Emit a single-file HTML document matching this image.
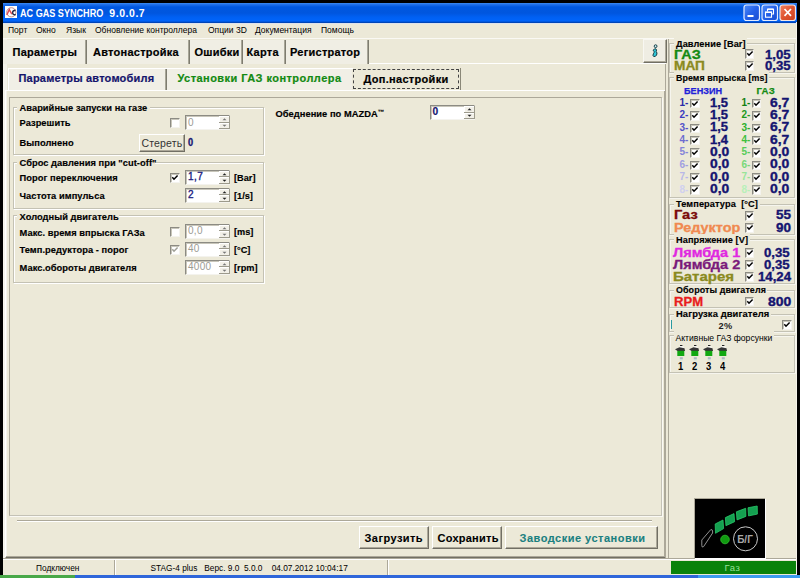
<!DOCTYPE html>
<html><head><meta charset="utf-8"><style>
*{margin:0;padding:0;box-sizing:border-box}
html,body{width:800px;height:578px;overflow:hidden;background:#000;font-family:"Liberation Sans",sans-serif}
.a{position:absolute;white-space:nowrap}
</style></head><body>
<div class="a" style="left:3px;top:22px;width:794px;height:553px;background:#ECE9D8"></div>
<div class="a" style="left:3px;top:3px;width:794px;height:20px;background:linear-gradient(#3C8CF0 0px,#2070EA 1.5px,#0058E0 4px,#0056DE 10px,#0060F2 14px,#0064FA 18px,#0048C0 19.2px,#0040A8 20px)"></div>
<div class="a" style="left:3px;top:23px;width:794px;height:1px;background:#DCE2EE"></div>
<div class="a" style="left:0px;top:575px;width:800px;height:3px;background:#2E66DA"></div>
<div class="a" style="left:698px;top:575px;width:102px;height:3px;background:#3C9CF0"></div>
<div class="a" style="left:0px;top:575px;width:75px;height:3px;background:#48A848"></div>
<div class="a" style="left:3px;top:39px;width:4px;height:519px;background:#F5F3EB"></div>
<div class="a" style="left:796px;top:22px;width:1px;height:553px;background:#F5F3EA"></div>
<svg class="a" style="left:5px;top:6px" width="12" height="12" viewBox="0 0 12 12"><rect width="12" height="12" fill="#fff"/><circle cx="6.3" cy="6.3" r="4.6" fill="none" stroke="#B88080" stroke-width="0.9"/><path d="M1.8 9 L4.3 3.6 L6.8 8.2" fill="none" stroke="#E04850" stroke-width="1.4"/><path d="M10.6 4.2 Q7.6 4.2 7.6 6.6 Q7.8 9.2 10.8 8.6" fill="none" stroke="#2C2C48" stroke-width="1.4"/></svg>
<div class="a" style="left:19.5px;top:8.08px;font-size:10.5px;line-height:10.5px;transform:scaleX(0.865);transform-origin:0 0;font-weight:bold;color:#fff;">AC GAS SYNCHRO</div>
<div class="a" style="left:109.3px;top:8.08px;font-size:10.5px;line-height:10.5px;font-weight:bold;color:#fff;letter-spacing:0.55px;">9.0.0.7</div>
<svg class="a" style="left:743px;top:4px" width="54" height="18" viewBox="0 0 54 18">
<defs><linearGradient id="gb" x1="0" y1="0" x2="1" y2="1"><stop offset="0" stop-color="#4E8CF8"/><stop offset="0.5" stop-color="#2460E8"/><stop offset="1" stop-color="#1A4CD0"/></linearGradient>
<linearGradient id="gr" x1="0" y1="0" x2="1" y2="1"><stop offset="0" stop-color="#F08060"/><stop offset="0.5" stop-color="#E05530"/><stop offset="1" stop-color="#C84020"/></linearGradient></defs>
<rect x="1" y="1" width="15.5" height="15.5" rx="2.5" fill="url(#gb)" stroke="#E4ECFF" stroke-width="1.2"/>
<rect x="19" y="1" width="15.5" height="15.5" rx="2.5" fill="url(#gb)" stroke="#E4ECFF" stroke-width="1.2"/>
<rect x="37" y="1" width="15.5" height="15.5" rx="2.5" fill="url(#gr)" stroke="#F4E8E4" stroke-width="1.2"/>
<rect x="4.5" y="11" width="6" height="2" fill="#fff"/>
<path d="M24.5 7.5 V5.2 H30.5 V10 H28.5" fill="none" stroke="#fff" stroke-width="1.1"/>
<rect x="24.5" y="4.5" width="6" height="1.3" fill="#fff"/>
<rect x="22.5" y="8.2" width="6" height="5" fill="none" stroke="#fff" stroke-width="1.1"/>
<rect x="22" y="7.6" width="7" height="1.4" fill="#fff"/>
<path d="M41.5 5 L48 11.8 M48 5 L41.5 11.8" stroke="#fff" stroke-width="1.7"/>
</svg>
<div class="a" style="left:8px;top:26.27px;font-size:8.5px;line-height:8.5px;">Порт</div>
<div class="a" style="left:36px;top:26.27px;font-size:8.5px;line-height:8.5px;">Окно</div>
<div class="a" style="left:66px;top:26.27px;font-size:8.5px;line-height:8.5px;">Язык</div>
<div class="a" style="left:95px;top:26.27px;font-size:8.5px;line-height:8.5px;">Обновление контроллера</div>
<div class="a" style="left:208px;top:26.27px;font-size:8.5px;line-height:8.5px;">Опции 3D</div>
<div class="a" style="left:255px;top:26.27px;font-size:8.5px;line-height:8.5px;">Документация</div>
<div class="a" style="left:321px;top:26.27px;font-size:8.5px;line-height:8.5px;">Помощь</div>
<div class="a" style="left:3px;top:38px;width:793px;height:1px;background:#FAF9F4"></div>
<div class="a" style="left:3px;top:63px;width:663px;height:1px;background:#fff"></div>
<div class="a" style="left:3px;top:40px;width:82px;height:24px;background:#F0EEE4"></div>
<div class="a" style="left:87px;top:40px;width:101px;height:24px;background:#F0EEE4"></div>
<div class="a" style="left:190px;top:40px;width:51px;height:24px;background:#F0EEE4"></div>
<div class="a" style="left:243px;top:40px;width:41px;height:24px;background:#F0EEE4"></div>
<div class="a" style="left:286px;top:40px;width:81px;height:24px;background:#F0EEE4"></div>
<div class="a" style="left:85px;top:40px;width:2px;height:24px;background:linear-gradient(90deg,#A8A698 0,#A8A698 50%,#7E7C70 50%)"></div>
<div class="a" style="left:188px;top:40px;width:2px;height:24px;background:linear-gradient(90deg,#A8A698 0,#A8A698 50%,#7E7C70 50%)"></div>
<div class="a" style="left:241px;top:40px;width:2px;height:24px;background:linear-gradient(90deg,#A8A698 0,#A8A698 50%,#7E7C70 50%)"></div>
<div class="a" style="left:284px;top:40px;width:2px;height:24px;background:linear-gradient(90deg,#A8A698 0,#A8A698 50%,#7E7C70 50%)"></div>
<div class="a" style="left:367px;top:40px;width:2px;height:24px;background:linear-gradient(90deg,#A8A698 0,#A8A698 50%,#7E7C70 50%)"></div>
<div class="a" style="left:12.5px;top:46.65px;font-size:11px;line-height:11px;-webkit-text-stroke:0.2px #000;font-weight:bold;letter-spacing:0.25px;">Параметры</div>
<div class="a" style="left:93px;top:46.65px;font-size:11px;line-height:11px;-webkit-text-stroke:0.2px #000;font-weight:bold;letter-spacing:0.25px;">Автонастройка</div>
<div class="a" style="left:194.5px;top:46.65px;font-size:11px;line-height:11px;-webkit-text-stroke:0.2px #000;font-weight:bold;letter-spacing:0.25px;">Ошибки</div>
<div class="a" style="left:246.5px;top:46.65px;font-size:11px;line-height:11px;-webkit-text-stroke:0.2px #000;font-weight:bold;letter-spacing:0.25px;">Карта</div>
<div class="a" style="left:290px;top:46.65px;font-size:11px;line-height:11px;-webkit-text-stroke:0.2px #000;font-weight:bold;letter-spacing:0.25px;">Регистратор</div>
<div class="a" style="left:643px;top:39px;width:24px;height:24px;background:#EFEDE3;border-left:1px solid #F8F7F2;border-top:1px solid #F8F7F2;border-right:1px solid #716F64;border-bottom:1px solid #716F64;box-shadow:inset -1px -1px 0 #ACA899"></div>
<svg class="a" style="left:648px;top:43px" width="14" height="16" viewBox="0 0 14 16"><circle cx="7.6" cy="3.2" r="1.4" fill="#C8F0F0" stroke="#153A45" stroke-width="1"/><path d="M5.2 7.2 Q6.5 5.2 7.8 5.8 Q9 6.6 8.2 8.5 Q9.6 9.8 8.6 12 Q7.4 14.2 5.6 13.4 Q4.4 12.6 5.4 10.8 Q6.4 9.6 6 8.4 Z" fill="#30C8D8" stroke="#153A45" stroke-width="1"/></svg>
<div class="a" style="left:9px;top:69px;width:156px;height:21px;background:#F1EFE6"></div>
<div class="a" style="left:167px;top:69px;width:185px;height:21px;background:#F1EFE6"></div>
<div class="a" style="left:8px;top:68px;width:345px;height:1px;background:#fff"></div>
<div class="a" style="left:8px;top:68px;width:1px;height:22px;background:#fff"></div>
<div class="a" style="left:165px;top:69px;width:2px;height:21px;background:linear-gradient(90deg,#A8A698 0,#A8A698 50%,#7E7C70 50%)"></div>
<div class="a" style="left:353px;top:68.8px;width:106px;height:20.2px;border:1px dashed #444"></div>
<div class="a" style="left:460px;top:68px;width:1px;height:22px;background:#8A8878"></div>
<div class="a" style="left:18.5px;top:72.65px;font-size:11px;line-height:11px;-webkit-text-stroke:0.2px #14146C;font-weight:bold;color:#14146C;letter-spacing:0.2px;">Параметры автомобиля</div>
<div class="a" style="left:177.5px;top:72.65px;font-size:11px;line-height:11px;-webkit-text-stroke:0.2px #128A12;font-weight:bold;color:#128A12;letter-spacing:0.45px;">Установки ГАЗ контроллера</div>
<div class="a" style="left:363.5px;top:73.65px;font-size:11px;line-height:11px;-webkit-text-stroke:0.2px #000;font-weight:bold;letter-spacing:0.3px;">Доп.настройки</div>
<div class="a" style="left:5px;top:90px;width:661px;height:468px;border-top:1px solid #fff;border-left:1px solid #fff;border-right:1px solid #716F64;border-bottom:1px solid #716F64;box-shadow:inset -1px -1px 0 #ACA899"></div>
<div class="a" style="left:9px;top:97px;width:653px;height:419px;border-top:1px solid #ACA899;border-left:1px solid #ACA899;border-right:1px solid #C4C2B6;border-bottom:1px solid #C4C2B6;box-shadow:1px 1px 0 #FAF9F4"></div>
<div class="a" style="left:17px;top:520px;width:635px;height:1px;background:#ACA899"></div>
<div class="a" style="left:17px;top:521px;width:635px;height:1px;background:#fff"></div>
<div class="a" style="left:359px;top:526px;width:70px;height:23px;border-left:1px solid #fff;border-top:1px solid #fff;border-right:1px solid #716F64;border-bottom:1px solid #716F64;box-shadow:inset -1px -1px 0 #ACA899"></div>
<div class="a" style="left:432px;top:526px;width:70px;height:23px;border-left:1px solid #fff;border-top:1px solid #fff;border-right:1px solid #716F64;border-bottom:1px solid #716F64;box-shadow:inset -1px -1px 0 #ACA899"></div>
<div class="a" style="left:505px;top:526px;width:153px;height:23px;border-left:1px solid #fff;border-top:1px solid #fff;border-right:1px solid #716F64;border-bottom:1px solid #716F64;box-shadow:inset -1px -1px 0 #ACA899"></div>
<div class="a" style="left:364.5px;top:532.65px;font-size:11px;line-height:11px;-webkit-text-stroke:0.1px #000;font-weight:bold;letter-spacing:0.45px;">Загрузить</div>
<div class="a" style="left:437.5px;top:532.65px;font-size:11px;line-height:11px;-webkit-text-stroke:0.1px #000;font-weight:bold;letter-spacing:0.25px;">Сохранить</div>
<div class="a" style="left:519.5px;top:532.65px;font-size:11px;line-height:11px;-webkit-text-stroke:0.1px #1A8080;font-weight:bold;color:#1A8080;letter-spacing:0.5px;">Заводские установки</div>
<div class="a" style="left:13px;top:107px;width:251px;height:47.5px;border:1px solid #C4C2B4;box-shadow:inset 1px 1px 0 #fff, 1px 1px 0 #fff"></div>
<div class="a" style="left:17px;top:103px;width:133px;height:9px;background:#ECE9D8"></div>
<div class="a" style="left:19.5px;top:104.39px;font-size:9.3px;line-height:9.3px;-webkit-text-stroke:0.15px #000;font-weight:bold;letter-spacing:0.05px;">Аварийные запуски на газе</div>
<div class="a" style="left:19.5px;top:119.39px;font-size:9.3px;line-height:9.3px;-webkit-text-stroke:0.15px #000;font-weight:bold;letter-spacing:0.05px;">Разрешить</div>
<div class="a" style="left:19.5px;top:139.09px;font-size:9.3px;line-height:9.3px;-webkit-text-stroke:0.15px #000;font-weight:bold;letter-spacing:0.05px;">Выполнено</div>
<div class="a" style="left:170px;top:118px;width:9.5px;height:9.5px;background:#fff;border-left:1px solid #8C8B83;border-top:1px solid #8C8B83;border-right:1px solid #F4F3EE;border-bottom:1px solid #F4F3EE;box-shadow:inset 1px 1px 0 #C8C6BA"></div>
<div class="a" style="left:185px;top:115px;width:45px;height:15px;background:#fff;border-left:1px solid #8C8B83;border-top:1px solid #8C8B83;border-right:1px solid #F4F3EE;border-bottom:1px solid #F4F3EE;box-shadow:inset 1px 1px 0 #C8C6BA"></div>
<div class="a" style="left:219px;top:116px;width:11px;height:6.5px;background:#F2F0E8;border-right:1px solid #9C9A8C;border-bottom:1px solid #9C9A8C;box-shadow:inset 1px 1px 0 #fff"></div>
<div class="a" style="left:219px;top:122.5px;width:11px;height:6.5px;background:#F2F0E8;border-right:1px solid #9C9A8C;border-bottom:1px solid #9C9A8C;box-shadow:inset 1px 1px 0 #fff"></div>
<svg class="a" style="left:219px;top:116px" width="11" height="13"><path d="M3.5 4.2 L5.5 2.2 L7.5 4.2 Z" fill="#777"/><path d="M3.5 8.8 L5.5 10.8 L7.5 8.8 Z" fill="#777"/></svg>
<div class="a" style="left:188px;top:117.70px;font-size:10px;line-height:10px;color:#9C9C94;letter-spacing:0.3px;">0</div>
<div class="a" style="left:139px;top:133.5px;width:46px;height:18px;border-left:1px solid #fff;border-top:1px solid #fff;border-right:1px solid #716F64;border-bottom:1px solid #716F64;box-shadow:inset -1px -1px 0 #ACA899"></div>
<div class="a" style="left:141.5px;top:137.57px;font-size:10.5px;line-height:10.5px;color:#333;letter-spacing:0.15px;">Стереть</div>
<div class="a" style="left:188px;top:137.50px;font-size:10px;line-height:10px;transform:scaleX(0.92);transform-origin:0 0;-webkit-text-stroke:0.3px #141470;font-weight:bold;color:#141470;">0</div>
<div class="a" style="left:13px;top:161.5px;width:251px;height:47px;border:1px solid #C4C2B4;box-shadow:inset 1px 1px 0 #fff, 1px 1px 0 #fff"></div>
<div class="a" style="left:17px;top:157px;width:138px;height:9px;background:#ECE9D8"></div>
<div class="a" style="left:19.5px;top:158.59px;font-size:9.3px;line-height:9.3px;-webkit-text-stroke:0.15px #000;font-weight:bold;letter-spacing:0.05px;">Сброс давления при "cut-off"</div>
<div class="a" style="left:19.5px;top:174.09px;font-size:9.3px;line-height:9.3px;-webkit-text-stroke:0.15px #000;font-weight:bold;letter-spacing:0.05px;">Порог переключения</div>
<div class="a" style="left:19.5px;top:192.09px;font-size:9.3px;line-height:9.3px;-webkit-text-stroke:0.15px #000;font-weight:bold;letter-spacing:0.05px;">Частота импульса</div>
<div class="a" style="left:170px;top:173px;width:9.5px;height:9.5px;background:#fff;border-left:1px solid #8C8B83;border-top:1px solid #8C8B83;border-right:1px solid #F4F3EE;border-bottom:1px solid #F4F3EE;box-shadow:inset 1px 1px 0 #C8C6BA"></div>
<svg class="a" style="left:170px;top:173px" width="10" height="10"><path d="M2.3 4.3 L4 6.2 L7.6 2.4" fill="none" stroke="#000" stroke-width="1.5"/></svg>
<div class="a" style="left:185px;top:169.5px;width:45px;height:15px;background:#fff;border-left:1px solid #8C8B83;border-top:1px solid #8C8B83;border-right:1px solid #F4F3EE;border-bottom:1px solid #F4F3EE;box-shadow:inset 1px 1px 0 #C8C6BA"></div>
<div class="a" style="left:219px;top:170.5px;width:11px;height:6.5px;background:#F2F0E8;border-right:1px solid #9C9A8C;border-bottom:1px solid #9C9A8C;box-shadow:inset 1px 1px 0 #fff"></div>
<div class="a" style="left:219px;top:177.0px;width:11px;height:6.5px;background:#F2F0E8;border-right:1px solid #9C9A8C;border-bottom:1px solid #9C9A8C;box-shadow:inset 1px 1px 0 #fff"></div>
<svg class="a" style="left:219px;top:170.5px" width="11" height="13"><path d="M3.5 4.2 L5.5 2.2 L7.5 4.2 Z" fill="#222"/><path d="M3.5 8.8 L5.5 10.8 L7.5 8.8 Z" fill="#222"/></svg>
<div class="a" style="left:188px;top:172.10px;font-size:10px;line-height:10px;-webkit-text-stroke:0.35px #202080;color:#202080;letter-spacing:0.4px;">1,7</div>
<div class="a" style="left:185px;top:187.5px;width:45px;height:15px;background:#fff;border-left:1px solid #8C8B83;border-top:1px solid #8C8B83;border-right:1px solid #F4F3EE;border-bottom:1px solid #F4F3EE;box-shadow:inset 1px 1px 0 #C8C6BA"></div>
<div class="a" style="left:219px;top:188.5px;width:11px;height:6.5px;background:#F2F0E8;border-right:1px solid #9C9A8C;border-bottom:1px solid #9C9A8C;box-shadow:inset 1px 1px 0 #fff"></div>
<div class="a" style="left:219px;top:195.0px;width:11px;height:6.5px;background:#F2F0E8;border-right:1px solid #9C9A8C;border-bottom:1px solid #9C9A8C;box-shadow:inset 1px 1px 0 #fff"></div>
<svg class="a" style="left:219px;top:188.5px" width="11" height="13"><path d="M3.5 4.2 L5.5 2.2 L7.5 4.2 Z" fill="#222"/><path d="M3.5 8.8 L5.5 10.8 L7.5 8.8 Z" fill="#222"/></svg>
<div class="a" style="left:188px;top:190.10px;font-size:10px;line-height:10px;-webkit-text-stroke:0.35px #202080;color:#202080;letter-spacing:0.4px;">2</div>
<div class="a" style="left:234px;top:173.68px;font-size:9.2px;line-height:9.2px;-webkit-text-stroke:0.15px #000;font-weight:bold;">[Bar]</div>
<div class="a" style="left:234px;top:191.68px;font-size:9.2px;line-height:9.2px;-webkit-text-stroke:0.15px #000;font-weight:bold;">[1/s]</div>
<div class="a" style="left:13px;top:215px;width:251px;height:67.5px;border:1px solid #C4C2B4;box-shadow:inset 1px 1px 0 #fff, 1px 1px 0 #fff"></div>
<div class="a" style="left:17px;top:211px;width:102px;height:9px;background:#ECE9D8"></div>
<div class="a" style="left:19.5px;top:212.59px;font-size:9.3px;line-height:9.3px;-webkit-text-stroke:0.15px #000;font-weight:bold;letter-spacing:0.05px;">Холодный двигатель</div>
<div class="a" style="left:19.5px;top:228.59px;font-size:9.3px;line-height:9.3px;-webkit-text-stroke:0.15px #000;font-weight:bold;letter-spacing:0.05px;">Макс. время впрыска ГАЗа</div>
<div class="a" style="left:19.5px;top:246.40px;font-size:9.3px;line-height:9.3px;-webkit-text-stroke:0.15px #000;font-weight:bold;letter-spacing:0.05px;">Темп.редуктора - порог</div>
<div class="a" style="left:19.5px;top:263.60px;font-size:9.3px;line-height:9.3px;-webkit-text-stroke:0.15px #000;font-weight:bold;letter-spacing:0.05px;">Макс.обороты двигателя</div>
<div class="a" style="left:170px;top:227px;width:9.5px;height:9.5px;background:#fff;border-left:1px solid #8C8B83;border-top:1px solid #8C8B83;border-right:1px solid #F4F3EE;border-bottom:1px solid #F4F3EE;box-shadow:inset 1px 1px 0 #C8C6BA"></div>
<div class="a" style="left:170px;top:245px;width:9.5px;height:9.5px;background:#fff;border-left:1px solid #8C8B83;border-top:1px solid #8C8B83;border-right:1px solid #F4F3EE;border-bottom:1px solid #F4F3EE;box-shadow:inset 1px 1px 0 #C8C6BA"></div>
<svg class="a" style="left:170px;top:245px" width="10" height="10"><path d="M2.3 4.3 L4 6.2 L7.6 2.4" fill="none" stroke="#A0A098" stroke-width="1.5"/></svg>
<div class="a" style="left:185px;top:223.5px;width:45px;height:15px;background:#fff;border-left:1px solid #8C8B83;border-top:1px solid #8C8B83;border-right:1px solid #F4F3EE;border-bottom:1px solid #F4F3EE;box-shadow:inset 1px 1px 0 #C8C6BA"></div>
<div class="a" style="left:219px;top:224.5px;width:11px;height:6.5px;background:#F2F0E8;border-right:1px solid #9C9A8C;border-bottom:1px solid #9C9A8C;box-shadow:inset 1px 1px 0 #fff"></div>
<div class="a" style="left:219px;top:231.0px;width:11px;height:6.5px;background:#F2F0E8;border-right:1px solid #9C9A8C;border-bottom:1px solid #9C9A8C;box-shadow:inset 1px 1px 0 #fff"></div>
<svg class="a" style="left:219px;top:224.5px" width="11" height="13"><path d="M3.5 4.2 L5.5 2.2 L7.5 4.2 Z" fill="#777"/><path d="M3.5 8.8 L5.5 10.8 L7.5 8.8 Z" fill="#777"/></svg>
<div class="a" style="left:188px;top:226.20px;font-size:10px;line-height:10px;color:#9C9C94;letter-spacing:0.3px;">0,0</div>
<div class="a" style="left:185px;top:241.5px;width:45px;height:15px;background:#fff;border-left:1px solid #8C8B83;border-top:1px solid #8C8B83;border-right:1px solid #F4F3EE;border-bottom:1px solid #F4F3EE;box-shadow:inset 1px 1px 0 #C8C6BA"></div>
<div class="a" style="left:219px;top:242.5px;width:11px;height:6.5px;background:#F2F0E8;border-right:1px solid #9C9A8C;border-bottom:1px solid #9C9A8C;box-shadow:inset 1px 1px 0 #fff"></div>
<div class="a" style="left:219px;top:249.0px;width:11px;height:6.5px;background:#F2F0E8;border-right:1px solid #9C9A8C;border-bottom:1px solid #9C9A8C;box-shadow:inset 1px 1px 0 #fff"></div>
<svg class="a" style="left:219px;top:242.5px" width="11" height="13"><path d="M3.5 4.2 L5.5 2.2 L7.5 4.2 Z" fill="#777"/><path d="M3.5 8.8 L5.5 10.8 L7.5 8.8 Z" fill="#777"/></svg>
<div class="a" style="left:188px;top:244.20px;font-size:10px;line-height:10px;color:#9C9C94;letter-spacing:0.3px;">40</div>
<div class="a" style="left:185px;top:259.5px;width:45px;height:15px;background:#fff;border-left:1px solid #8C8B83;border-top:1px solid #8C8B83;border-right:1px solid #F4F3EE;border-bottom:1px solid #F4F3EE;box-shadow:inset 1px 1px 0 #C8C6BA"></div>
<div class="a" style="left:219px;top:260.5px;width:11px;height:6.5px;background:#F2F0E8;border-right:1px solid #9C9A8C;border-bottom:1px solid #9C9A8C;box-shadow:inset 1px 1px 0 #fff"></div>
<div class="a" style="left:219px;top:267.0px;width:11px;height:6.5px;background:#F2F0E8;border-right:1px solid #9C9A8C;border-bottom:1px solid #9C9A8C;box-shadow:inset 1px 1px 0 #fff"></div>
<svg class="a" style="left:219px;top:260.5px" width="11" height="13"><path d="M3.5 4.2 L5.5 2.2 L7.5 4.2 Z" fill="#777"/><path d="M3.5 8.8 L5.5 10.8 L7.5 8.8 Z" fill="#777"/></svg>
<div class="a" style="left:188px;top:262.20px;font-size:10px;line-height:10px;color:#9C9C94;letter-spacing:0.3px;">4000</div>
<div class="a" style="left:234px;top:227.68px;font-size:9.2px;line-height:9.2px;-webkit-text-stroke:0.15px #000;font-weight:bold;">[ms]</div>
<div class="a" style="left:234px;top:245.68px;font-size:9.2px;line-height:9.2px;-webkit-text-stroke:0.15px #000;font-weight:bold;">[°C]</div>
<div class="a" style="left:234px;top:263.68px;font-size:9.2px;line-height:9.2px;-webkit-text-stroke:0.15px #000;font-weight:bold;">[rpm]</div>
<div class="a" style="left:275.5px;top:110.09px;font-size:9.3px;line-height:9.3px;-webkit-text-stroke:0.15px #000;font-weight:bold;letter-spacing:0.05px;">Обеднение по MAZDA<span style="font-size:6.5px;position:relative;top:-3.5px">™</span></div>
<div class="a" style="left:430px;top:105px;width:45px;height:15px;background:#fff;border-left:1px solid #8C8B83;border-top:1px solid #8C8B83;border-right:1px solid #F4F3EE;border-bottom:1px solid #F4F3EE;box-shadow:inset 1px 1px 0 #C8C6BA"></div>
<div class="a" style="left:464px;top:106px;width:11px;height:6.5px;background:#F2F0E8;border-right:1px solid #9C9A8C;border-bottom:1px solid #9C9A8C;box-shadow:inset 1px 1px 0 #fff"></div>
<div class="a" style="left:464px;top:112.5px;width:11px;height:6.5px;background:#F2F0E8;border-right:1px solid #9C9A8C;border-bottom:1px solid #9C9A8C;box-shadow:inset 1px 1px 0 #fff"></div>
<svg class="a" style="left:464px;top:106px" width="11" height="13"><path d="M3.5 4.2 L5.5 2.2 L7.5 4.2 Z" fill="#222"/><path d="M3.5 8.8 L5.5 10.8 L7.5 8.8 Z" fill="#222"/></svg>
<div class="a" style="left:432.5px;top:107.33px;font-size:10.2px;line-height:10.2px;-webkit-text-stroke:0.2px #141470;font-weight:bold;color:#141470;letter-spacing:0.2px;">0</div>
<div class="a" style="left:3px;top:558px;width:793px;height:1px;background:#ACA899"></div>
<div class="a" style="left:3px;top:559px;width:793px;height:16px;background:#ECE9D8;border-top:1px solid #fff"></div>
<div class="a" style="left:114px;top:560px;width:1px;height:15px;background:#ACA899"></div>
<div class="a" style="left:115px;top:560px;width:1px;height:15px;background:#fff"></div>
<div class="a" style="left:387px;top:560px;width:1px;height:15px;background:#ACA899"></div>
<div class="a" style="left:388px;top:560px;width:1px;height:15px;background:#fff"></div>
<div class="a" style="left:36px;top:563.95px;font-size:8.3px;line-height:8.3px;">Подключен</div>
<div class="a" style="left:150.5px;top:563.95px;font-size:8.3px;line-height:8.3px;">STAG-4 plus&nbsp;&nbsp;&nbsp;Верс. 9.0&nbsp;&nbsp;5.0.0&nbsp;&nbsp;&nbsp;&nbsp;04.07.2012 10:04:17</div>
<div class="a" style="left:670.5px;top:561px;width:125.5px;height:12.8px;background:#0A820A"></div>
<div class="a" style="left:724.5px;top:562.92px;font-size:9.5px;line-height:9.5px;color:#98E098;letter-spacing:0.6px;">Газ</div>
<div class="a" style="left:665px;top:64px;width:1px;height:494px;background:#ACA899"></div>
<div class="a" style="left:668px;top:39px;width:1px;height:519px;background:#ACA899"></div>
<div class="a" style="left:669px;top:42.5px;width:126px;height:30.0px;border:1px solid #C4C2B4;box-shadow:inset 1px 1px 0 #F6F5EE, 1px 1px 0 #F6F5EE"></div>
<div class="a" style="left:674px;top:37.5px;width:73px;height:9px;background:#ECE9D8"></div>
<div class="a" style="left:676px;top:39.68px;font-size:9.2px;line-height:9.2px;-webkit-text-stroke:0.15px #000;font-weight:bold;letter-spacing:0.1px;">Давление [Bar]</div>
<div class="a" style="left:673.5px;top:48.60px;font-size:12px;line-height:12px;transform:scaleX(1.2);transform-origin:0 0;-webkit-text-stroke:0.3px #138A13;font-weight:bold;color:#138A13;">ГАЗ</div>
<div class="a" style="left:673.5px;top:60.30px;font-size:12px;line-height:12px;transform:scaleX(1.14);transform-origin:0 0;-webkit-text-stroke:0.3px #8A8A20;font-weight:bold;color:#8A8A20;">МАП</div>
<div class="a" style="left:744.5px;top:49px;width:9.5px;height:9.5px;background:#fff;border-left:1px solid #8C8B83;border-top:1px solid #8C8B83;border-right:1px solid #F4F3EE;border-bottom:1px solid #F4F3EE;box-shadow:inset 1px 1px 0 #C8C6BA"></div>
<div class="a" style="left:744.5px;top:61px;width:9.5px;height:9.5px;background:#fff;border-left:1px solid #8C8B83;border-top:1px solid #8C8B83;border-right:1px solid #F4F3EE;border-bottom:1px solid #F4F3EE;box-shadow:inset 1px 1px 0 #C8C6BA"></div>
<svg class="a" style="left:744.5px;top:49px" width="10" height="10"><path d="M2.3 4.3 L4 6.2 L7.6 2.4" fill="none" stroke="#000" stroke-width="1.5"/></svg>
<svg class="a" style="left:744.5px;top:61px" width="10" height="10"><path d="M2.3 4.3 L4 6.2 L7.6 2.4" fill="none" stroke="#000" stroke-width="1.5"/></svg>
<div class="a" style="left:764.5px;top:48.60px;font-size:12px;line-height:12px;transform:scaleX(1.1);transform-origin:0 0;-webkit-text-stroke:0.35px #141470;font-weight:bold;color:#141470;">1,05</div>
<div class="a" style="left:764.5px;top:60.30px;font-size:12px;line-height:12px;transform:scaleX(1.1);transform-origin:0 0;-webkit-text-stroke:0.35px #141470;font-weight:bold;color:#141470;">0,35</div>
<div class="a" style="left:669px;top:77px;width:126px;height:120.5px;border:1px solid #C4C2B4;box-shadow:inset 1px 1px 0 #F6F5EE, 1px 1px 0 #F6F5EE"></div>
<div class="a" style="left:674px;top:72px;width:95px;height:9px;background:#ECE9D8"></div>
<div class="a" style="left:676px;top:73.88px;font-size:9.2px;line-height:9.2px;transform:scaleX(0.962);transform-origin:0 0;-webkit-text-stroke:0.15px #000;font-weight:bold;letter-spacing:0.1px;">Время впрыска [ms]</div>
<div class="a" style="left:683.5px;top:85.84px;font-size:9.6px;line-height:9.6px;transform:scaleX(0.95);transform-origin:0 0;-webkit-text-stroke:0.25px #2020D8;font-weight:bold;color:#2020D8;">БЕНЗИН</div>
<div class="a" style="left:756.5px;top:85.84px;font-size:9.6px;line-height:9.6px;-webkit-text-stroke:0.25px #128A12;font-weight:bold;color:#128A12;letter-spacing:0.2px;">ГАЗ</div>
<div class="a" style="left:679.5px;top:98.00px;font-size:10px;line-height:10px;font-weight:bold;color:#2A2AA8;">1-</div>
<div class="a" style="left:690px;top:98.8px;width:9.5px;height:9.5px;background:#fff;border-left:1px solid #8C8B83;border-top:1px solid #8C8B83;border-right:1px solid #F4F3EE;border-bottom:1px solid #F4F3EE;box-shadow:inset 1px 1px 0 #C8C6BA"></div>
<svg class="a" style="left:690px;top:98.8px" width="10" height="10"><path d="M2.3 4.3 L4 6.2 L7.6 2.4" fill="none" stroke="#000" stroke-width="1.5"/></svg>
<div class="a" style="left:710px;top:96.60px;font-size:12px;line-height:12px;transform:scaleX(1.08);transform-origin:0 0;-webkit-text-stroke:0.35px #141470;font-weight:bold;color:#141470;">1,5</div>
<div class="a" style="left:741.5px;top:98.00px;font-size:10px;line-height:10px;font-weight:bold;color:#128012;">1-</div>
<div class="a" style="left:751.5px;top:98.8px;width:9.5px;height:9.5px;background:#fff;border-left:1px solid #8C8B83;border-top:1px solid #8C8B83;border-right:1px solid #F4F3EE;border-bottom:1px solid #F4F3EE;box-shadow:inset 1px 1px 0 #C8C6BA"></div>
<svg class="a" style="left:751.5px;top:98.8px" width="10" height="10"><path d="M2.3 4.3 L4 6.2 L7.6 2.4" fill="none" stroke="#000" stroke-width="1.5"/></svg>
<div class="a" style="left:769.5px;top:96.60px;font-size:12px;line-height:12px;transform:scaleX(1.16);transform-origin:0 0;-webkit-text-stroke:0.35px #141470;font-weight:bold;color:#141470;">6,7</div>
<div class="a" style="left:679.5px;top:110.37px;font-size:10px;line-height:10px;font-weight:bold;color:#3C3CC0;">2-</div>
<div class="a" style="left:690px;top:111.17px;width:9.5px;height:9.5px;background:#fff;border-left:1px solid #8C8B83;border-top:1px solid #8C8B83;border-right:1px solid #F4F3EE;border-bottom:1px solid #F4F3EE;box-shadow:inset 1px 1px 0 #C8C6BA"></div>
<svg class="a" style="left:690px;top:111.2px" width="10" height="10"><path d="M2.3 4.3 L4 6.2 L7.6 2.4" fill="none" stroke="#000" stroke-width="1.5"/></svg>
<div class="a" style="left:710px;top:108.97px;font-size:12px;line-height:12px;transform:scaleX(1.08);transform-origin:0 0;-webkit-text-stroke:0.35px #141470;font-weight:bold;color:#141470;">1,5</div>
<div class="a" style="left:741.5px;top:110.37px;font-size:10px;line-height:10px;font-weight:bold;color:#1E9A1E;">2-</div>
<div class="a" style="left:751.5px;top:111.17px;width:9.5px;height:9.5px;background:#fff;border-left:1px solid #8C8B83;border-top:1px solid #8C8B83;border-right:1px solid #F4F3EE;border-bottom:1px solid #F4F3EE;box-shadow:inset 1px 1px 0 #C8C6BA"></div>
<svg class="a" style="left:751.5px;top:111.2px" width="10" height="10"><path d="M2.3 4.3 L4 6.2 L7.6 2.4" fill="none" stroke="#000" stroke-width="1.5"/></svg>
<div class="a" style="left:769.5px;top:108.97px;font-size:12px;line-height:12px;transform:scaleX(1.16);transform-origin:0 0;-webkit-text-stroke:0.35px #141470;font-weight:bold;color:#141470;">6,7</div>
<div class="a" style="left:679.5px;top:122.74px;font-size:10px;line-height:10px;font-weight:bold;color:#5454C8;">3-</div>
<div class="a" style="left:690px;top:123.53999999999999px;width:9.5px;height:9.5px;background:#fff;border-left:1px solid #8C8B83;border-top:1px solid #8C8B83;border-right:1px solid #F4F3EE;border-bottom:1px solid #F4F3EE;box-shadow:inset 1px 1px 0 #C8C6BA"></div>
<svg class="a" style="left:690px;top:123.5px" width="10" height="10"><path d="M2.3 4.3 L4 6.2 L7.6 2.4" fill="none" stroke="#000" stroke-width="1.5"/></svg>
<div class="a" style="left:710px;top:121.34px;font-size:12px;line-height:12px;transform:scaleX(1.08);transform-origin:0 0;-webkit-text-stroke:0.35px #141470;font-weight:bold;color:#141470;">1,5</div>
<div class="a" style="left:741.5px;top:122.74px;font-size:10px;line-height:10px;font-weight:bold;color:#2CB02C;">3-</div>
<div class="a" style="left:751.5px;top:123.53999999999999px;width:9.5px;height:9.5px;background:#fff;border-left:1px solid #8C8B83;border-top:1px solid #8C8B83;border-right:1px solid #F4F3EE;border-bottom:1px solid #F4F3EE;box-shadow:inset 1px 1px 0 #C8C6BA"></div>
<svg class="a" style="left:751.5px;top:123.5px" width="10" height="10"><path d="M2.3 4.3 L4 6.2 L7.6 2.4" fill="none" stroke="#000" stroke-width="1.5"/></svg>
<div class="a" style="left:769.5px;top:121.34px;font-size:12px;line-height:12px;transform:scaleX(1.16);transform-origin:0 0;-webkit-text-stroke:0.35px #141470;font-weight:bold;color:#141470;">6,7</div>
<div class="a" style="left:679.5px;top:135.11px;font-size:10px;line-height:10px;font-weight:bold;color:#6C6CD0;">4-</div>
<div class="a" style="left:690px;top:135.91px;width:9.5px;height:9.5px;background:#fff;border-left:1px solid #8C8B83;border-top:1px solid #8C8B83;border-right:1px solid #F4F3EE;border-bottom:1px solid #F4F3EE;box-shadow:inset 1px 1px 0 #C8C6BA"></div>
<svg class="a" style="left:690px;top:135.9px" width="10" height="10"><path d="M2.3 4.3 L4 6.2 L7.6 2.4" fill="none" stroke="#000" stroke-width="1.5"/></svg>
<div class="a" style="left:710px;top:133.71px;font-size:12px;line-height:12px;transform:scaleX(1.08);transform-origin:0 0;-webkit-text-stroke:0.35px #141470;font-weight:bold;color:#141470;">1,4</div>
<div class="a" style="left:741.5px;top:135.11px;font-size:10px;line-height:10px;font-weight:bold;color:#40C040;">4-</div>
<div class="a" style="left:751.5px;top:135.91px;width:9.5px;height:9.5px;background:#fff;border-left:1px solid #8C8B83;border-top:1px solid #8C8B83;border-right:1px solid #F4F3EE;border-bottom:1px solid #F4F3EE;box-shadow:inset 1px 1px 0 #C8C6BA"></div>
<svg class="a" style="left:751.5px;top:135.9px" width="10" height="10"><path d="M2.3 4.3 L4 6.2 L7.6 2.4" fill="none" stroke="#000" stroke-width="1.5"/></svg>
<div class="a" style="left:769.5px;top:133.71px;font-size:12px;line-height:12px;transform:scaleX(1.16);transform-origin:0 0;-webkit-text-stroke:0.35px #141470;font-weight:bold;color:#141470;">6,7</div>
<div class="a" style="left:679.5px;top:147.48px;font-size:10px;line-height:10px;font-weight:bold;color:#8484D8;">5-</div>
<div class="a" style="left:690px;top:148.28px;width:9.5px;height:9.5px;background:#fff;border-left:1px solid #8C8B83;border-top:1px solid #8C8B83;border-right:1px solid #F4F3EE;border-bottom:1px solid #F4F3EE;box-shadow:inset 1px 1px 0 #C8C6BA"></div>
<svg class="a" style="left:690px;top:148.3px" width="10" height="10"><path d="M2.3 4.3 L4 6.2 L7.6 2.4" fill="none" stroke="#000" stroke-width="1.5"/></svg>
<div class="a" style="left:709.5px;top:146.08px;font-size:12px;line-height:12px;transform:scaleX(1.15);transform-origin:0 0;-webkit-text-stroke:0.35px #141470;font-weight:bold;color:#141470;">0,0</div>
<div class="a" style="left:741.5px;top:147.48px;font-size:10px;line-height:10px;font-weight:bold;color:#58CC58;">5-</div>
<div class="a" style="left:751.5px;top:148.28px;width:9.5px;height:9.5px;background:#fff;border-left:1px solid #8C8B83;border-top:1px solid #8C8B83;border-right:1px solid #F4F3EE;border-bottom:1px solid #F4F3EE;box-shadow:inset 1px 1px 0 #C8C6BA"></div>
<svg class="a" style="left:751.5px;top:148.3px" width="10" height="10"><path d="M2.3 4.3 L4 6.2 L7.6 2.4" fill="none" stroke="#000" stroke-width="1.5"/></svg>
<div class="a" style="left:769.5px;top:146.08px;font-size:12px;line-height:12px;transform:scaleX(1.16);transform-origin:0 0;-webkit-text-stroke:0.35px #141470;font-weight:bold;color:#141470;">0,0</div>
<div class="a" style="left:679.5px;top:159.85px;font-size:10px;line-height:10px;font-weight:bold;color:#A0A0E0;">6-</div>
<div class="a" style="left:690px;top:160.64999999999998px;width:9.5px;height:9.5px;background:#fff;border-left:1px solid #8C8B83;border-top:1px solid #8C8B83;border-right:1px solid #F4F3EE;border-bottom:1px solid #F4F3EE;box-shadow:inset 1px 1px 0 #C8C6BA"></div>
<svg class="a" style="left:690px;top:160.6px" width="10" height="10"><path d="M2.3 4.3 L4 6.2 L7.6 2.4" fill="none" stroke="#000" stroke-width="1.5"/></svg>
<div class="a" style="left:709.5px;top:158.45px;font-size:12px;line-height:12px;transform:scaleX(1.15);transform-origin:0 0;-webkit-text-stroke:0.35px #141470;font-weight:bold;color:#141470;">0,0</div>
<div class="a" style="left:741.5px;top:159.85px;font-size:10px;line-height:10px;font-weight:bold;color:#78D878;">6-</div>
<div class="a" style="left:751.5px;top:160.64999999999998px;width:9.5px;height:9.5px;background:#fff;border-left:1px solid #8C8B83;border-top:1px solid #8C8B83;border-right:1px solid #F4F3EE;border-bottom:1px solid #F4F3EE;box-shadow:inset 1px 1px 0 #C8C6BA"></div>
<svg class="a" style="left:751.5px;top:160.6px" width="10" height="10"><path d="M2.3 4.3 L4 6.2 L7.6 2.4" fill="none" stroke="#000" stroke-width="1.5"/></svg>
<div class="a" style="left:769.5px;top:158.45px;font-size:12px;line-height:12px;transform:scaleX(1.16);transform-origin:0 0;-webkit-text-stroke:0.35px #141470;font-weight:bold;color:#141470;">0,0</div>
<div class="a" style="left:679.5px;top:172.22px;font-size:10px;line-height:10px;font-weight:bold;color:#B8B8E8;">7-</div>
<div class="a" style="left:690px;top:173.01999999999998px;width:9.5px;height:9.5px;background:#fff;border-left:1px solid #8C8B83;border-top:1px solid #8C8B83;border-right:1px solid #F4F3EE;border-bottom:1px solid #F4F3EE;box-shadow:inset 1px 1px 0 #C8C6BA"></div>
<svg class="a" style="left:690px;top:173.0px" width="10" height="10"><path d="M2.3 4.3 L4 6.2 L7.6 2.4" fill="none" stroke="#000" stroke-width="1.5"/></svg>
<div class="a" style="left:709.5px;top:170.82px;font-size:12px;line-height:12px;transform:scaleX(1.15);transform-origin:0 0;-webkit-text-stroke:0.35px #141470;font-weight:bold;color:#141470;">0,0</div>
<div class="a" style="left:741.5px;top:172.22px;font-size:10px;line-height:10px;font-weight:bold;color:#98E498;">7-</div>
<div class="a" style="left:751.5px;top:173.01999999999998px;width:9.5px;height:9.5px;background:#fff;border-left:1px solid #8C8B83;border-top:1px solid #8C8B83;border-right:1px solid #F4F3EE;border-bottom:1px solid #F4F3EE;box-shadow:inset 1px 1px 0 #C8C6BA"></div>
<svg class="a" style="left:751.5px;top:173.0px" width="10" height="10"><path d="M2.3 4.3 L4 6.2 L7.6 2.4" fill="none" stroke="#000" stroke-width="1.5"/></svg>
<div class="a" style="left:769.5px;top:170.82px;font-size:12px;line-height:12px;transform:scaleX(1.16);transform-origin:0 0;-webkit-text-stroke:0.35px #141470;font-weight:bold;color:#141470;">0,0</div>
<div class="a" style="left:679.5px;top:184.59px;font-size:10px;line-height:10px;font-weight:bold;color:#D0D0F0;">8-</div>
<div class="a" style="left:690px;top:185.39px;width:9.5px;height:9.5px;background:#fff;border-left:1px solid #8C8B83;border-top:1px solid #8C8B83;border-right:1px solid #F4F3EE;border-bottom:1px solid #F4F3EE;box-shadow:inset 1px 1px 0 #C8C6BA"></div>
<svg class="a" style="left:690px;top:185.4px" width="10" height="10"><path d="M2.3 4.3 L4 6.2 L7.6 2.4" fill="none" stroke="#000" stroke-width="1.5"/></svg>
<div class="a" style="left:709.5px;top:183.19px;font-size:12px;line-height:12px;transform:scaleX(1.15);transform-origin:0 0;-webkit-text-stroke:0.35px #141470;font-weight:bold;color:#141470;">0,0</div>
<div class="a" style="left:741.5px;top:184.59px;font-size:10px;line-height:10px;font-weight:bold;color:#B8F0B8;">8-</div>
<div class="a" style="left:751.5px;top:185.39px;width:9.5px;height:9.5px;background:#fff;border-left:1px solid #8C8B83;border-top:1px solid #8C8B83;border-right:1px solid #F4F3EE;border-bottom:1px solid #F4F3EE;box-shadow:inset 1px 1px 0 #C8C6BA"></div>
<svg class="a" style="left:751.5px;top:185.4px" width="10" height="10"><path d="M2.3 4.3 L4 6.2 L7.6 2.4" fill="none" stroke="#000" stroke-width="1.5"/></svg>
<div class="a" style="left:769.5px;top:183.19px;font-size:12px;line-height:12px;transform:scaleX(1.16);transform-origin:0 0;-webkit-text-stroke:0.35px #141470;font-weight:bold;color:#141470;">0,0</div>
<div class="a" style="left:669px;top:203.5px;width:126px;height:31.0px;border:1px solid #C4C2B4;box-shadow:inset 1px 1px 0 #F6F5EE, 1px 1px 0 #F6F5EE"></div>
<div class="a" style="left:674px;top:198.5px;width:86px;height:9px;background:#ECE9D8"></div>
<div class="a" style="left:676px;top:200.38px;font-size:9.2px;line-height:9.2px;-webkit-text-stroke:0.15px #000;font-weight:bold;letter-spacing:0.1px;">Температура&nbsp;&nbsp;[°C]</div>
<div class="a" style="left:673.5px;top:209.30px;font-size:12px;line-height:12px;transform:scaleX(1.22);transform-origin:0 0;-webkit-text-stroke:0.3px #7A0A0A;font-weight:bold;color:#7A0A0A;">Газ</div>
<div class="a" style="left:673.5px;top:221.80px;font-size:12px;line-height:12px;transform:scaleX(1.2);transform-origin:0 0;-webkit-text-stroke:0.3px #F08A50;font-weight:bold;color:#F08A50;">Редуктор</div>
<div class="a" style="left:744.5px;top:211px;width:9.5px;height:9.5px;background:#fff;border-left:1px solid #8C8B83;border-top:1px solid #8C8B83;border-right:1px solid #F4F3EE;border-bottom:1px solid #F4F3EE;box-shadow:inset 1px 1px 0 #C8C6BA"></div>
<svg class="a" style="left:744.5px;top:211px" width="10" height="10"><path d="M2.3 4.3 L4 6.2 L7.6 2.4" fill="none" stroke="#000" stroke-width="1.5"/></svg>
<div class="a" style="left:744.5px;top:223px;width:9.5px;height:9.5px;background:#fff;border-left:1px solid #8C8B83;border-top:1px solid #8C8B83;border-right:1px solid #F4F3EE;border-bottom:1px solid #F4F3EE;box-shadow:inset 1px 1px 0 #C8C6BA"></div>
<svg class="a" style="left:744.5px;top:223px" width="10" height="10"><path d="M2.3 4.3 L4 6.2 L7.6 2.4" fill="none" stroke="#000" stroke-width="1.5"/></svg>
<div class="a" style="left:776px;top:209.30px;font-size:12px;line-height:12px;transform:scaleX(1.12);transform-origin:0 0;-webkit-text-stroke:0.35px #141470;font-weight:bold;color:#141470;">55</div>
<div class="a" style="left:776px;top:221.80px;font-size:12px;line-height:12px;transform:scaleX(1.12);transform-origin:0 0;-webkit-text-stroke:0.35px #141470;font-weight:bold;color:#141470;">90</div>
<div class="a" style="left:669px;top:239px;width:126px;height:44.5px;border:1px solid #C4C2B4;box-shadow:inset 1px 1px 0 #F6F5EE, 1px 1px 0 #F6F5EE"></div>
<div class="a" style="left:674px;top:234px;width:76px;height:9px;background:#ECE9D8"></div>
<div class="a" style="left:676px;top:236.48px;font-size:9.2px;line-height:9.2px;-webkit-text-stroke:0.15px #000;font-weight:bold;letter-spacing:0.1px;">Напряжение [V]</div>
<div class="a" style="left:672.5px;top:247.00px;font-size:12px;line-height:12px;transform:scaleX(1.21);transform-origin:0 0;-webkit-text-stroke:0.3px #E028E0;font-weight:bold;color:#E028E0;">Лямбда 1</div>
<div class="a" style="left:672.5px;top:259.10px;font-size:12px;line-height:12px;transform:scaleX(1.21);transform-origin:0 0;-webkit-text-stroke:0.3px #7A1A7A;font-weight:bold;color:#7A1A7A;">Лямбда 2</div>
<div class="a" style="left:672.5px;top:271.20px;font-size:12px;line-height:12px;transform:scaleX(1.25);transform-origin:0 0;-webkit-text-stroke:0.3px #8A8A20;font-weight:bold;color:#8A8A20;">Батарея</div>
<div class="a" style="left:744.5px;top:248px;width:9.5px;height:9.5px;background:#fff;border-left:1px solid #8C8B83;border-top:1px solid #8C8B83;border-right:1px solid #F4F3EE;border-bottom:1px solid #F4F3EE;box-shadow:inset 1px 1px 0 #C8C6BA"></div>
<svg class="a" style="left:744.5px;top:248px" width="10" height="10"><path d="M2.3 4.3 L4 6.2 L7.6 2.4" fill="none" stroke="#000" stroke-width="1.5"/></svg>
<div class="a" style="left:744.5px;top:260px;width:9.5px;height:9.5px;background:#fff;border-left:1px solid #8C8B83;border-top:1px solid #8C8B83;border-right:1px solid #F4F3EE;border-bottom:1px solid #F4F3EE;box-shadow:inset 1px 1px 0 #C8C6BA"></div>
<svg class="a" style="left:744.5px;top:260px" width="10" height="10"><path d="M2.3 4.3 L4 6.2 L7.6 2.4" fill="none" stroke="#000" stroke-width="1.5"/></svg>
<div class="a" style="left:744.5px;top:272px;width:9.5px;height:9.5px;background:#fff;border-left:1px solid #8C8B83;border-top:1px solid #8C8B83;border-right:1px solid #F4F3EE;border-bottom:1px solid #F4F3EE;box-shadow:inset 1px 1px 0 #C8C6BA"></div>
<svg class="a" style="left:744.5px;top:272px" width="10" height="10"><path d="M2.3 4.3 L4 6.2 L7.6 2.4" fill="none" stroke="#000" stroke-width="1.5"/></svg>
<div class="a" style="left:763.5px;top:247.00px;font-size:12px;line-height:12px;transform:scaleX(1.1);transform-origin:0 0;-webkit-text-stroke:0.35px #141470;font-weight:bold;color:#141470;">0,35</div>
<div class="a" style="left:763.5px;top:259.10px;font-size:12px;line-height:12px;transform:scaleX(1.1);transform-origin:0 0;-webkit-text-stroke:0.35px #141470;font-weight:bold;color:#141470;">0,35</div>
<div class="a" style="left:758px;top:271.20px;font-size:12px;line-height:12px;transform:scaleX(1.1);transform-origin:0 0;-webkit-text-stroke:0.35px #141470;font-weight:bold;color:#141470;">14,24</div>
<div class="a" style="left:669px;top:290px;width:126px;height:18px;border:1px solid #C4C2B4;box-shadow:inset 1px 1px 0 #F6F5EE, 1px 1px 0 #F6F5EE"></div>
<div class="a" style="left:674px;top:285px;width:93px;height:9px;background:#ECE9D8"></div>
<div class="a" style="left:676px;top:286.18px;font-size:9.2px;line-height:9.2px;transform:scaleX(0.968);transform-origin:0 0;-webkit-text-stroke:0.15px #000;font-weight:bold;letter-spacing:0.1px;">Обороты двигателя</div>
<div class="a" style="left:673.5px;top:295.80px;font-size:12px;line-height:12px;transform:scaleX(1.09);transform-origin:0 0;-webkit-text-stroke:0.3px #E81C1C;font-weight:bold;color:#E81C1C;">RPM</div>
<div class="a" style="left:744.5px;top:296.5px;width:9.5px;height:9.5px;background:#fff;border-left:1px solid #8C8B83;border-top:1px solid #8C8B83;border-right:1px solid #F4F3EE;border-bottom:1px solid #F4F3EE;box-shadow:inset 1px 1px 0 #C8C6BA"></div>
<svg class="a" style="left:744.5px;top:296.5px" width="10" height="10"><path d="M2.3 4.3 L4 6.2 L7.6 2.4" fill="none" stroke="#000" stroke-width="1.5"/></svg>
<div class="a" style="left:767.5px;top:295.80px;font-size:12px;line-height:12px;transform:scaleX(1.16);transform-origin:0 0;-webkit-text-stroke:0.35px #141470;font-weight:bold;color:#141470;">800</div>
<div class="a" style="left:669px;top:313.5px;width:126px;height:18.0px;border:1px solid #C4C2B4;box-shadow:inset 1px 1px 0 #F6F5EE, 1px 1px 0 #F6F5EE"></div>
<div class="a" style="left:674px;top:308.5px;width:97px;height:9px;background:#ECE9D8"></div>
<div class="a" style="left:676px;top:310.48px;font-size:9.2px;line-height:9.2px;transform:scaleX(1.02);transform-origin:0 0;-webkit-text-stroke:0.15px #000;font-weight:bold;letter-spacing:0.1px;">Нагрузка двигателя</div>
<div class="a" style="left:670.5px;top:320px;width:1.5px;height:9px;background:#2A9AA0"></div>
<div class="a" style="left:718.5px;top:321.68px;font-size:9.2px;line-height:9.2px;font-weight:bold;color:#222;letter-spacing:0.4px;">2%</div>
<div class="a" style="left:782.3px;top:320px;width:9.5px;height:9.5px;background:#fff;border-left:1px solid #8C8B83;border-top:1px solid #8C8B83;border-right:1px solid #F4F3EE;border-bottom:1px solid #F4F3EE;box-shadow:inset 1px 1px 0 #C8C6BA"></div>
<svg class="a" style="left:782.3px;top:320px" width="10" height="10"><path d="M2.3 4.3 L4 6.2 L7.6 2.4" fill="none" stroke="#000" stroke-width="1.5"/></svg>
<div class="a" style="left:669px;top:335px;width:126px;height:37.5px;border:1px solid #C4C2B4;box-shadow:inset 1px 1px 0 #F6F5EE, 1px 1px 0 #F6F5EE"></div>
<div class="a" style="left:674px;top:331px;width:100px;height:9px;background:#ECE9D8"></div>
<div class="a" style="left:675.5px;top:333.69px;font-size:8.6px;line-height:8.6px;">Активные ГАЗ форсунки</div>
<svg class="a" style="left:675.00px;top:344px" width="12" height="17" viewBox="0 0 12 17"><rect x="5" y="1" width="2.4" height="1" fill="#222"/><rect x="4.5" y="2.2" width="4" height="3" fill="#F8F8F4"/><path d="M0 5.2 L4.5 3.2 L9.5 4.2 L10 7 L2.5 7 Z" fill="#353535"/><rect x="2.3" y="6.8" width="7" height="5.2" fill="#12A812"/><rect x="4.8" y="13.6" width="3" height="0.9" fill="#7088A8"/><rect x="4.8" y="15.4" width="3" height="0.8" fill="#B0D8D8"/></svg>
<div class="a" style="left:678.3px;top:361.47px;font-size:10.5px;line-height:10.5px;transform:scaleX(0.9);transform-origin:0 0;font-weight:bold;">1</div>
<svg class="a" style="left:689.03px;top:344px" width="12" height="17" viewBox="0 0 12 17"><rect x="5" y="1" width="2.4" height="1" fill="#222"/><rect x="4.5" y="2.2" width="4" height="3" fill="#F8F8F4"/><path d="M0 5.2 L4.5 3.2 L9.5 4.2 L10 7 L2.5 7 Z" fill="#353535"/><rect x="2.3" y="6.8" width="7" height="5.2" fill="#12A812"/><rect x="4.8" y="13.6" width="3" height="0.9" fill="#7088A8"/><rect x="4.8" y="15.4" width="3" height="0.8" fill="#B0D8D8"/></svg>
<div class="a" style="left:692.3299999999999px;top:361.47px;font-size:10.5px;line-height:10.5px;transform:scaleX(0.9);transform-origin:0 0;font-weight:bold;">2</div>
<svg class="a" style="left:703.06px;top:344px" width="12" height="17" viewBox="0 0 12 17"><rect x="5" y="1" width="2.4" height="1" fill="#222"/><rect x="4.5" y="2.2" width="4" height="3" fill="#F8F8F4"/><path d="M0 5.2 L4.5 3.2 L9.5 4.2 L10 7 L2.5 7 Z" fill="#353535"/><rect x="2.3" y="6.8" width="7" height="5.2" fill="#12A812"/><rect x="4.8" y="13.6" width="3" height="0.9" fill="#7088A8"/><rect x="4.8" y="15.4" width="3" height="0.8" fill="#B0D8D8"/></svg>
<div class="a" style="left:706.3599999999999px;top:361.47px;font-size:10.5px;line-height:10.5px;transform:scaleX(0.9);transform-origin:0 0;font-weight:bold;">3</div>
<svg class="a" style="left:717.09px;top:344px" width="12" height="17" viewBox="0 0 12 17"><rect x="5" y="1" width="2.4" height="1" fill="#222"/><rect x="4.5" y="2.2" width="4" height="3" fill="#F8F8F4"/><path d="M0 5.2 L4.5 3.2 L9.5 4.2 L10 7 L2.5 7 Z" fill="#353535"/><rect x="2.3" y="6.8" width="7" height="5.2" fill="#12A812"/><rect x="4.8" y="13.6" width="3" height="0.9" fill="#7088A8"/><rect x="4.8" y="15.4" width="3" height="0.8" fill="#B0D8D8"/></svg>
<div class="a" style="left:720.39px;top:361.47px;font-size:10.5px;line-height:10.5px;transform:scaleX(0.9);transform-origin:0 0;font-weight:bold;">4</div>
<div class="a" style="left:695px;top:499px;width:71px;height:60px;background:#000;border-right:1px solid #fff;border-bottom:1px solid #fff;box-shadow:-1px -1px 0 #ACA899"></div>
<svg class="a" style="left:695px;top:499px" width="70" height="58" viewBox="0 0 70 58">
<path d="M6.8 41 L15.6 30.8 Q17.2 29.8 17.6 32 L17.6 34 L8.6 47.6 Q6.8 49 6.8 46.5 Z" fill="none" stroke="#A0A0A0" stroke-width="0.9"/>
<path d="M20.2 25 L28 21 L28.6 29.6 L20.5 34.3 Z" fill="#14A050" stroke="#28C868" stroke-width="0.8" stroke-linejoin="round"/>
<path d="M30.4 18.6 L39 14.6 L39.6 22.7 L30.9 26.7 Z" fill="#14A050" stroke="#28C868" stroke-width="0.8" stroke-linejoin="round"/>
<path d="M41.4 12.8 L50.7 9.3 L50.9 17.4 L42 20.9 Z" fill="#14A050" stroke="#28C868" stroke-width="0.8" stroke-linejoin="round"/>
<path d="M53 8.75 L62.2 7 L62.4 15.1 L53.5 16.9 Z" fill="#14A050" stroke="#28C868" stroke-width="0.8" stroke-linejoin="round"/>
<circle cx="30" cy="40.5" r="4.3" fill="#109A10" stroke="#30C030" stroke-width="0.8"/>
<circle cx="50.5" cy="39.8" r="12" fill="none" stroke="#C8C8C8" stroke-width="1"/>
<text x="50" y="43.6" font-family="Liberation Sans" font-size="10" font-weight="bold" fill="#A8A8A8" text-anchor="middle">Б/Г</text>
</svg>
</body></html>
